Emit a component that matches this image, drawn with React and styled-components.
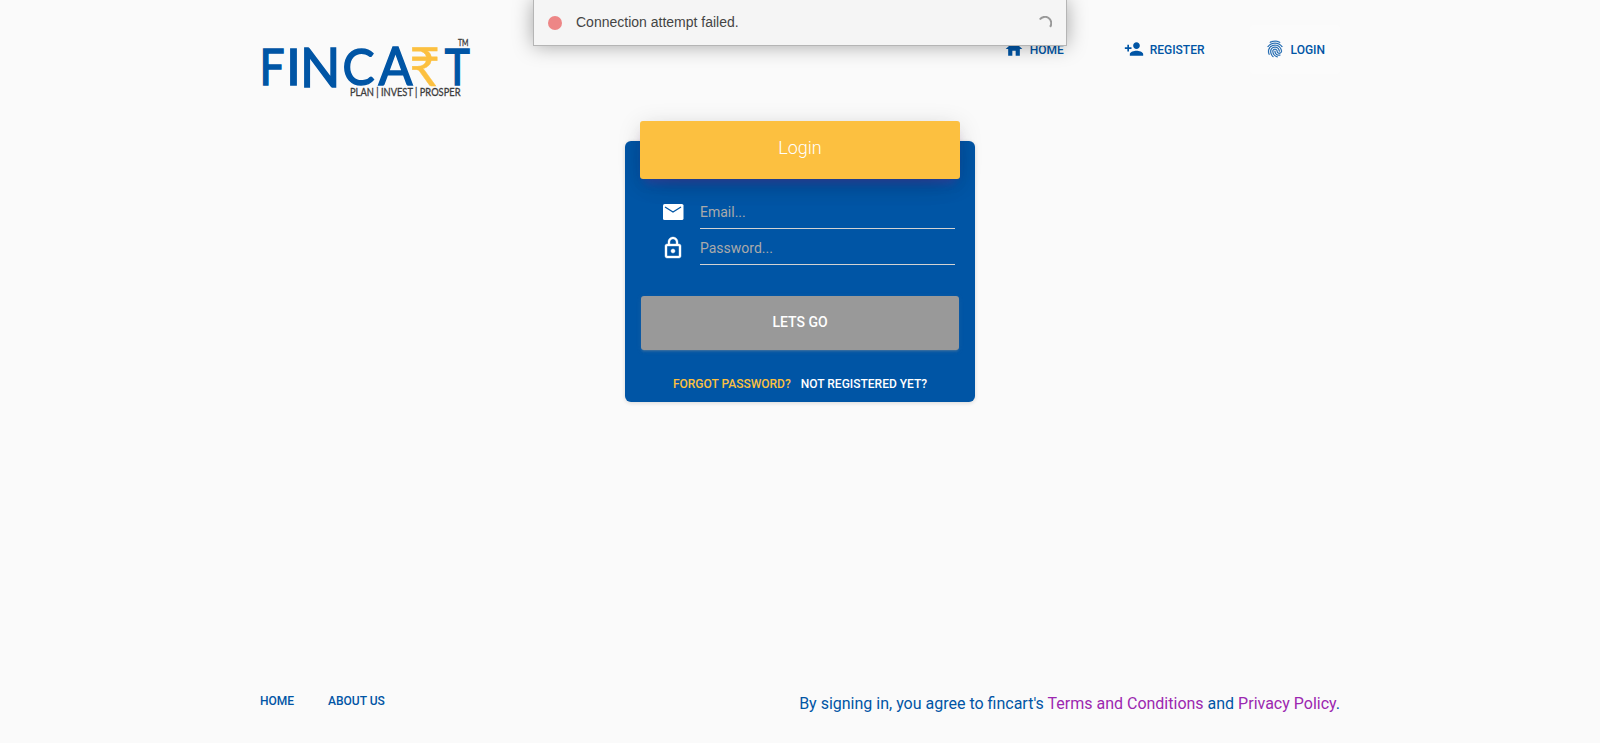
import React from "react";
import styled, { createGlobalStyle } from "styled-components";
import { MdHome, MdPersonAdd, MdFingerprint, MdLockOutline } from "react-icons/md";

const BLUE = "#0055a5";
const AMBER = "#fcc040";

const GlobalStyle = createGlobalStyle`
  *, *::before, *::after { box-sizing: border-box; }
  body {
    margin: 0;
    background: #fafafa;
    font-family: Roboto, "Liberation Sans", sans-serif;
    font-weight: 400;
    color: ${BLUE};
  }
  a { text-decoration: none; color: inherit; }
`;

const Page = styled.div`
  height: 743px;
  display: flex;
  flex-direction: column;
  overflow: hidden;
`;

const Header = styled.header`
  width: 1080px;
  height: 121px;
  margin: 0 auto;
  display: flex;
  justify-content: space-between;
  align-items: flex-start;
`;

const Logo = styled.svg`
  display: block;
  width: 214px;
  height: 70px;
  margin-top: 34px;
`;

const Nav = styled.nav`
  display: flex;
  gap: 30px;
  margin-top: 25px;
`;

const NavLink = styled.a`
  display: flex;
  align-items: center;
  gap: 6px;
  height: 49px;
  padding: 0 15px;
  border-radius: 3px;
  font-size: 12px;
  font-weight: 500;
  line-height: 20px;
  background: ${(p) => (p.$active ? "#fbfbfb" : "transparent")};
  svg { width: 20px; height: 20px; margin-top: -1px; }
`;

const FingerprintIcon = styled(MdFingerprint)`
  stroke-width: 0.25;
  path[fill="none"] { stroke: none; }
`;

const Toast = styled.div`
  position: absolute;
  top: 0;
  left: 533px;
  width: 534px;
  height: 46px;
  display: flex;
  align-items: center;
  padding: 0 14px 1px 14px;
  background: #f5f5f5;
  border: 1px solid #b5b5b5;
  border-top: 0;
  box-shadow: 0 0 20px rgba(0, 0, 0, 0.34);
  font: 14px/20px "Liberation Sans", Arial, sans-serif;
  color: #444;
`;

const StatusDot = styled.span`
  width: 14px;
  height: 14px;
  margin: 2px 14px 0 0;
  border-radius: 50%;
  background: #ed8686;
`;

const Spinner = styled.svg`
  width: 14px;
  height: 14px;
  margin: 2px 0 0 auto;
`;

const Main = styled.main`
  flex: 1;
  padding-top: 20px;
`;

const Card = styled.form`
  width: 350px;
  height: 261px;
  margin: 0 auto;
  display: flex;
  flex-direction: column;
  align-items: center;
  border-radius: 6px;
  background: ${BLUE};
  box-shadow: 0 1px 4px rgba(0, 0, 0, 0.14);
`;

const CardHeader = styled.h4`
  width: 320px;
  height: 58px;
  margin: -20px 0 21px;
  padding-top: 14px;
  border-radius: 3px;
  background: ${AMBER};
  box-shadow: 0 10px 30px -12px rgba(0, 0, 0, 0.2), 0 4px 25px 0 rgba(0, 0, 0, 0.12),
    0 8px 10px -5px rgba(156, 39, 176, 0.35);
  color: #fff;
  text-align: center;
  font-size: 18px;
  font-weight: 300;
  line-height: 25px;
`;

const Field = styled.label`
  width: 294px;
  height: 36px;
  margin-left: 16px;
  display: flex;
  gap: 15px;
  color: #fff;
  svg { width: 24px; height: 24px; flex: none; }
`;

const LockIcon = styled(MdLockOutline)`
  stroke-width: 0.4;
  path[fill="none"] { stroke: none; }
`;

const Input = styled.input`
  flex: 1;
  min-width: 0;
  height: 29px;
  padding: 0 0 4px;
  border: 0;
  border-bottom: 1px solid #d2d2d2;
  outline: 0;
  background: transparent;
  color: #fff;
  font: 400 14px/20px Roboto, sans-serif;
  &::placeholder { color: #aaa; opacity: 1; }
`;

const Submit = styled.button`
  width: 318px;
  height: 54px;
  margin: 24px 0 25px;
  padding: 0 0 2px;
  border: 0;
  border-radius: 3px;
  background: #999;
  box-shadow: 0 2px 2px rgba(153, 153, 153, 0.14), 0 3px 1px -2px rgba(153, 153, 153, 0.2),
    0 1px 5px rgba(153, 153, 153, 0.12);
  color: #fff;
  font: 500 14px/20px Roboto, sans-serif;
`;

const CardLinks = styled.div`
  display: flex;
  gap: 10px;
  font-size: 12px;
  font-weight: 500;
  line-height: 18px;
`;

const CardLink = styled.a`
  color: ${(p) => (p.$accent ? AMBER : "#fff")};
`;

const Footer = styled.footer`
  width: 1080px;
  height: 62px;
  margin: 0 auto;
  display: flex;
  justify-content: space-between;
  align-items: flex-start;
`;

const FooterLinks = styled.div`
  display: flex;
  gap: 34px;
  padding-top: 11px;
  font-size: 12px;
  font-weight: 500;
  line-height: 18px;
`;

const Legal = styled.p`
  margin: 11px 0 0;
  font-size: 16px;
  line-height: 24px;
  a { color: #9c27b0; }
`;

const letters = [
  { ch: "F", x: 259.4, w: 25 },
  { ch: "I", x: 286, w: 15 },
  { ch: "N", x: 300, w: 40.4, size: 54, y: 86.6 },
  { ch: "C", x: 342.4, w: 32 },
  { ch: "A", x: 378.6, w: 34, size: 52 },
  { ch: "T", x: 444.7, w: 25 },
];

function FincartLogo() {
  return (
    <Logo viewBox="260 34 214 70" overflow="visible" role="img">
      <g fontFamily="Lato, sans-serif" fill={BLUE} stroke={BLUE} strokeWidth="1.5">
        {letters.map(({ ch, x, w, size = 50, y = 85 }) => (
          <text key={ch} x={x} y={y} fontSize={size} textLength={w} lengthAdjust="spacingAndGlyphs">{ch}</text>
        ))}
      </g>
      <text x="409" y="85.5" fontFamily="Lato, sans-serif" fontSize="54" fill={AMBER} stroke={AMBER}
        strokeWidth="0.3" textLength="31" lengthAdjust="spacingAndGlyphs">₹</text>
      <g fontFamily="Lato, sans-serif" fill="#3c3c3c" stroke="#3c3c3c" strokeWidth="0.3">
        <text x="458" y="45.7" fontSize="8.5" textLength="10.5" lengthAdjust="spacingAndGlyphs">TM</text>
        <text x="350" y="96" fontSize="10.8" textLength="110.5" lengthAdjust="spacingAndGlyphs">PLAN | INVEST | PROSPER</text>
      </g>
    </Logo>
  );
}

function EnvelopeIcon() {
  return (
    <svg viewBox="0 0 24 24">
      <rect x="2" y="4" width="20.5" height="16" rx="1.6" fill="#fff" />
      <path d="M4 7l8 5 8-5" fill="none" stroke={BLUE} strokeWidth="1.3" />
    </svg>
  );
}

export default function App() {
  return (
    <>
      <GlobalStyle />
      <Page>
        <Header>
          <FincartLogo />
          <Nav>
            <NavLink href="#"><MdHome />HOME</NavLink>
            <NavLink href="#"><MdPersonAdd />REGISTER</NavLink>
            <NavLink href="#" $active><FingerprintIcon />LOGIN</NavLink>
          </Nav>
        </Header>
        <Main>
          <Card>
            <CardHeader>Login</CardHeader>
            <Field><EnvelopeIcon /><Input type="email" placeholder="Email..." /></Field>
            <Field><LockIcon /><Input type="password" placeholder="Password..." /></Field>
            <Submit type="button">LETS GO</Submit>
            <CardLinks>
              <CardLink href="#" $accent>FORGOT PASSWORD?</CardLink>
              <CardLink href="#">NOT REGISTERED YET?</CardLink>
            </CardLinks>
          </Card>
        </Main>
        <Footer>
          <FooterLinks><a href="#">HOME</a><a href="#">ABOUT US</a></FooterLinks>
          <Legal>
            By signing in, you agree to fincart's <a href="#">Terms and Conditions</a> and <a href="#">Privacy Policy</a>.
          </Legal>
        </Footer>
      </Page>
      <Toast role="status">
        <StatusDot />
        Connection attempt failed.
        <Spinner viewBox="0 0 14 14" fill="none" stroke="#999" strokeWidth="2">
          <path d="M1.8 3.5A6 6 0 0 1 12.1 10.8" />
        </Spinner>
      </Toast>
    </>
  );
}
